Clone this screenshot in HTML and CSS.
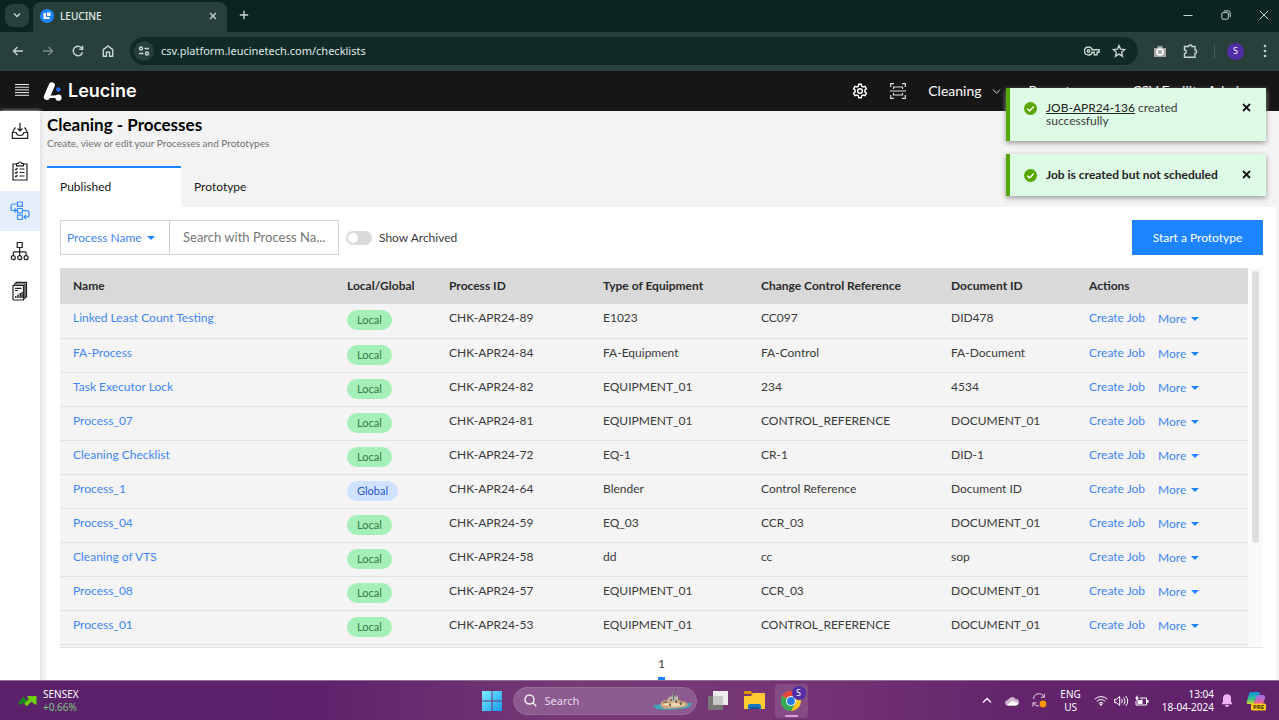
FILE: index.html
```html
<!DOCTYPE html>
<html lang="en">
<head>
<meta charset="utf-8">
<title>LEUCINE</title>
<link rel="stylesheet" href="styles.css">
</head>
<body>
<div class="screen">
  <div class="tabstrip">
    <button class="tab-search" aria-label="Search tabs"><svg width="10" height="10" viewBox="0 0 10 10"><path d="M2 3.5l3 3 3-3" class="ln"/></svg></button>
    <div class="browser-tab">
      <svg width="14" height="14" viewBox="0 0 14 14"><circle cx="7" cy="7" r="7" fill="#1d84ff"/><path d="M3.500 4v6h6V8H6V4z" fill="#fff"/><path d="M7 3.500h3.500V7H7z" fill="#fff"/></svg>
      <span class="tab-title">LEUCINE</span>
      <button class="bare" aria-label="Close tab"><svg width="10" height="10" viewBox="0 0 10 10"><path d="M2 2l6 6M8 2L2 8" class="ln"/></svg></button>
    </div>
    <button class="bare" aria-label="New tab"><svg width="10" height="10" viewBox="0 0 10 10"><path d="M5 .8v8.400M.8 5h8.400" class="ln"/></svg></button>
    <div class="window-buttons">
      <button class="bare" aria-label="Minimize"><svg width="10" height="10" viewBox="0 0 10 10"><path d="M.5 5.500h9" class="ln thin"/></svg></button>
      <button class="bare" aria-label="Restore"><svg width="10" height="10" viewBox="0 0 10 10"><rect x=".8" y="2.600" width="6.600" height="6.600" rx="1.200" class="ln thin"/><path d="M2.800.9h4.400a2 2 0 0 1 2 2v4.300" class="ln thin"/></svg></button>
      <button class="bare" aria-label="Close"><svg width="10" height="10" viewBox="0 0 10 10"><path d="M.8.8l8.400 8.400M9.200.8L.8 9.200" class="ln thin"/></svg></button>
    </div>
  </div>
  <div class="toolbar">
    <div class="nav-buttons">
      <button class="bare" aria-label="Back"><svg width="12" height="12" viewBox="0 0 12 12"><path d="M11 6H1.500M5.500 2l-4 4 4 4" class="ln"/></svg></button>
      <button class="bare dim" aria-label="Forward"><svg width="12" height="12" viewBox="0 0 12 12"><path d="M1 6h9.500M6.500 2l4 4-4 4" class="ln"/></svg></button>
      <button class="bare" aria-label="Reload"><svg width="12" height="12" viewBox="0 0 12 12"><path d="M10.500 7.200A4.700 4.700 0 1 1 9.600 3M10.600.8v3.400H7.200" class="ln"/></svg></button>
      <button class="bare" aria-label="Home"><svg width="12" height="12" viewBox="0 0 12 12"><path d="M1.300 11.300V4.600L6 1l4.700 3.600v6.700H7.600V7.200H4.400v4.100z" class="ln"/></svg></button>
    </div>
    <div class="address">
      <span class="site-info"><svg width="12" height="12" viewBox="0 0 12 12"><circle cx="3" cy="3.500" r="1.500" class="ln"/><path d="M6.500 3.500H11M1 8.500h4.500" class="ln"/><circle cx="9" cy="8.500" r="1.500" class="ln"/></svg></span>
      <input class="url" type="text" aria-label="Address" value="csv.platform.leucinetech.com/checklists">
      <svg width="16" height="10" viewBox="0 0 16 10"><path d="M4.500 1a4 4 0 1 0 3.700 5.300h2v2.500h2.900V6.300h2V3.700H8.200A4 4 0 0 0 4.500 1z" class="ln"/><circle cx="4.500" cy="5" r="1.300" class="ln"/></svg>
      <svg width="14" height="14" viewBox="0 0 14 14"><path d="M7 1.500l1.600 3.700 4 .4-3 2.700.9 3.900L7 10.100l-3.500 2.100.9-3.900-3-2.700 4-.4z" class="ln"/></svg>
    </div>
    <div class="extensions">
      <svg width="14" height="13" viewBox="0 0 14 13"><path d="M1 3h3l1-2h4l1 2h3v9H1z" fill="#a9aaa9"/><circle cx="7" cy="7" r="3" fill="#a9aaa9" stroke="#fff" stroke-width="1.600"/></svg>
      <svg width="15" height="15" viewBox="0 0 15 15"><path d="M1.500 2.500h4c0-2 3.500-2 3.500 0h3v3.500c2.200 0 2.200 3.300 0 3.300v4H1.500V9.500c2.400 0 2.400-3.500 0-3.500z" class="ln"/></svg>
      <span class="divider"></span>
      <span class="profile">S</span>
      <svg width="4" height="14" viewBox="0 0 4 14" fill="#c7d5d1"><circle cx="2" cy="2" r="1.300"/><circle cx="2" cy="7" r="1.300"/><circle cx="2" cy="12" r="1.300"/></svg>
    </div>
  </div>

  <header class="app-header">
    <button class="bare" aria-label="Menu"><svg width="14" height="12" viewBox="0 0 14 12"><path d="M0 .5h14M0 3.200h14M0 5.900h14M0 8.600h14M0 11.300h14" stroke="#eee" fill="none"/></svg></button>
    <div class="brand">
      <svg width="19" height="19" viewBox="0 0 19 19"><path d="M8.800 3.300L3.800 15" stroke="#fff" stroke-width="6" stroke-linecap="round"/><path d="M4 15L15.500 14.500" stroke="#fff" stroke-width="2.500"/><circle cx="15.500" cy="15.700" r="3.100" fill="#fff"/><circle cx="15.400" cy="7.500" r="2.300" fill="#2468f2"/></svg>
      <span>Leucine</span>
    </div>
    <div class="header-right">
      <svg width="16" height="16" viewBox="0 0 24 24"><path d="M10 2h4l.6 3 2 1.100 3-1 2 3.500-2.300 2v2.800l2.300 2-2 3.500-3-1-2 1.100-.6 3h-4l-.6-3-2-1.100-3 1-2-3.500 2.300-2v-2.800l-2.300-2 2-3.500 3 1 2-1.100z" fill="none" stroke="#fff" stroke-width="2.200"/><circle cx="12" cy="12" r="3.500" fill="none" stroke="#fff" stroke-width="2.200"/></svg>
      <svg width="16" height="16" viewBox="0 0 16 16" fill="none" stroke="#ddd" stroke-width="1.200"><path d="M.7 4V.7H4M12 .7h3.300V4M15.300 12v3.300H12M4 15.300H.7V12M0 8h16M3.500 6V4h9v2M3.500 10v2h9v-2"/></svg>
      <button class="header-menu">Cleaning <svg width="9" height="9" viewBox="0 0 9 9"><path d="M.8 2.500l3.700 3.700 3.700-3.700" class="ln thin"/></svg></button>
      <button class="header-menu reports">Reports</button>
      <button class="header-menu">CSV Facility Admin</button>
    </div>
  </header>

  <div class="app-body">
    <nav class="rail">
      <a href="#" aria-label="Inbox"><svg width="18" height="18" viewBox="0 0 18 18" class="ic"><path d="M5 6H3.700L1.300 11v5.300h15.400V11l-2.400-5H13M1.300 10.500h3.900c.4 4 7.200 4 7.600 0h3.900M9 .8v8M6.500 6.500L9 9l2.500-2.500"/></svg></a>
      <a href="#" aria-label="Jobs"><svg width="18" height="20" viewBox="0 0 18 20" class="ic"><path d="M5.500 3H2v16h14V3h-3.500M5.500 4.800h7V2.500h-1.800C10.400.5 7.600.5 7.300 2.500H5.500zM4 7.800l1 1 1.500-1.800M4 11.300l1 1 1.500-1.800M4 14.800l1 1 1.500-1.800M8.500 8h5M8.500 11.500h5M8.500 15h5"/></svg></a>
      <a href="#" class="active" aria-label="Processes"><svg width="20" height="20" viewBox="0 0 20 20" class="ic"><path d="M7.500 1h4.800v4.300H7.500zM7.500 7.500h4.800v4.300H7.500zM7.500 14.200h4.800v4.300H7.500zM7.500 3H3a2 2 0 0 0-2 2v2.500a2 2 0 0 0 2 2h3M4.500 7.500l2 2-2 2M12.300 9.700H17a2 2 0 0 1 2 2V14a2 2 0 0 1-2 2h-3M16 14l-2 2 2 2"/></svg></a>
      <a href="#" aria-label="Ontology"><svg width="20" height="20" viewBox="0 0 20 20" class="ic"><path d="M7.200 1.500h5v5h-5zM9.700 6.500v8.200M3.300 14.500v-2.600a1 1 0 0 1 1-1h10.800a1 1 0 0 1 1 1v2.600"/><circle cx="3.300" cy="16.700" r="2"/><circle cx="9.700" cy="16.700" r="2"/><circle cx="16.100" cy="16.700" r="2"/></svg></a>
      <a href="#" aria-label="Reports"><svg width="18" height="20" viewBox="0 0 18 20" class="ic"><path d="M2 4.500h10.500V19H3a1 1 0 0 1-1-1zM3.500 4.500V3H14v14.500h-1.500M5 3V1.300h10.500V16H14M4 7.300h6.500M4 9.500h3"/><path d="M4.800 17v-2M7 17v-3.500M9.200 17v-5M11 17v-6" stroke-width="1.400"/></svg></a>
    </nav>
    <main class="page">
      <h1>Cleaning - Processes</h1>
      <p class="subtitle">Create, view or edit your Processes and Prototypes</p>
      <div class="tabs" role="tablist">
        <button role="tab" aria-selected="true" class="tab selected">Published</button>
        <button role="tab" aria-selected="false" class="tab">Prototype</button>
      </div>
      <section class="panel">
        <div class="filters">
          <div class="search-group">
            <button class="field-picker">Process Name <span class="caret"></span></button>
            <input class="search" type="text" aria-label="Search" placeholder="Search with Process Na...">
          </div>
          <label class="toggle"><input type="checkbox" role="switch">Show Archived</label>
          <button class="primary">Start a Prototype</button>
        </div>
        <div class="table-box">
          <table>
            <colgroup><col class="c-name"><col class="c-scope"><col class="c-id"><col class="c-type"><col class="c-ref"><col class="c-doc"><col class="c-act"></colgroup>
            <thead><tr><th>Name</th><th>Local/Global</th><th>Process ID</th><th>Type of Equipment</th><th>Change Control Reference</th><th>Document ID</th><th>Actions</th></tr></thead>
            <tbody>
              <tr><td><a href="#">Linked Least Count Testing</a></td><td><span class="pill">Local</span></td><td>CHK-APR24-89</td><td>E1023</td><td>CC097</td><td>DID478</td><td><div class="actions"><a href="#">Create Job</a><button class="more">More <span class="caret"></span></button></div></td></tr>
              <tr><td><a href="#">FA-Process</a></td><td><span class="pill">Local</span></td><td>CHK-APR24-84</td><td>FA-Equipment</td><td>FA-Control</td><td>FA-Document</td><td><div class="actions"><a href="#">Create Job</a><button class="more">More <span class="caret"></span></button></div></td></tr>
              <tr><td><a href="#">Task Executor Lock</a></td><td><span class="pill">Local</span></td><td>CHK-APR24-82</td><td>EQUIPMENT_01</td><td>234</td><td>4534</td><td><div class="actions"><a href="#">Create Job</a><button class="more">More <span class="caret"></span></button></div></td></tr>
              <tr><td><a href="#">Process_07</a></td><td><span class="pill">Local</span></td><td>CHK-APR24-81</td><td>EQUIPMENT_01</td><td>CONTROL_REFERENCE</td><td>DOCUMENT_01</td><td><div class="actions"><a href="#">Create Job</a><button class="more">More <span class="caret"></span></button></div></td></tr>
              <tr><td><a href="#">Cleaning Checklist</a></td><td><span class="pill">Local</span></td><td>CHK-APR24-72</td><td>EQ-1</td><td>CR-1</td><td>DID-1</td><td><div class="actions"><a href="#">Create Job</a><button class="more">More <span class="caret"></span></button></div></td></tr>
              <tr><td><a href="#">Process_1</a></td><td><span class="pill global">Global</span></td><td>CHK-APR24-64</td><td>Blender</td><td>Control Reference</td><td>Document ID</td><td><div class="actions"><a href="#">Create Job</a><button class="more">More <span class="caret"></span></button></div></td></tr>
              <tr><td><a href="#">Process_04</a></td><td><span class="pill">Local</span></td><td>CHK-APR24-59</td><td>EQ_03</td><td>CCR_03</td><td>DOCUMENT_01</td><td><div class="actions"><a href="#">Create Job</a><button class="more">More <span class="caret"></span></button></div></td></tr>
              <tr><td><a href="#">Cleaning of VTS</a></td><td><span class="pill">Local</span></td><td>CHK-APR24-58</td><td>dd</td><td>cc</td><td>sop</td><td><div class="actions"><a href="#">Create Job</a><button class="more">More <span class="caret"></span></button></div></td></tr>
              <tr><td><a href="#">Process_08</a></td><td><span class="pill">Local</span></td><td>CHK-APR24-57</td><td>EQUIPMENT_01</td><td>CCR_03</td><td>DOCUMENT_01</td><td><div class="actions"><a href="#">Create Job</a><button class="more">More <span class="caret"></span></button></div></td></tr>
              <tr><td><a href="#">Process_01</a></td><td><span class="pill">Local</span></td><td>CHK-APR24-53</td><td>EQUIPMENT_01</td><td>CONTROL_REFERENCE</td><td>DOCUMENT_01</td><td><div class="actions"><a href="#">Create Job</a><button class="more">More <span class="caret"></span></button></div></td></tr>
            </tbody>
          </table>
          <div class="scrollbar"><div class="thumb"></div></div>
        </div>
        <div class="pager"><button class="page-number">1</button></div>
      </section>
    </main>
  </div>

  <footer class="taskbar">
    <div class="widget">
      <svg width="19" height="12" viewBox="0 0 19 12"><path d="M1.500 9l4-4.500 3.500 4" fill="none" stroke="#148a1c" stroke-width="3.500"/><path d="M7.500 10L14 3.500" stroke="#6ccf10" stroke-width="3.800"/><path d="M9.500 1h9v8.500h-1.800L9.500 2.800z" fill="#6ccf10"/></svg>
      <div class="widget-text"><span>SENSEX</span><span class="gain">+0.66%</span></div>
    </div>
    <div class="dock">
      <svg width="20" height="20" viewBox="0 0 20 20"><defs><linearGradient id="win" x2="1" y2="1"><stop stop-color="#7df0ff"/><stop offset="1" stop-color="#1399ee"/></linearGradient></defs><path d="M0 0h9.500v9.500H0zM10.500 0H20v9.500h-9.500zM0 10.500h9.500V20H0zM10.500 10.500H20V20h-9.500z" fill="url(#win)"/></svg>
      <button class="os-search">
        <svg width="13" height="13" viewBox="0 0 13 13" fill="none" stroke="#eee" stroke-width="1.500"><circle cx="5.500" cy="5.500" r="4.500"/><path d="M8.800 8.800L12.300 12.300"/></svg>
        <span>Search</span>
        <svg width="40" height="18" viewBox="0 0 40 18"><path d="M0 13l13-1 27-1-5 5-18 2-14-1z" fill="#3fa5b9"/><path d="M7 13l2-4 5-1 1-2 3-1 4 2h4l2 2 5 1 2 4-8 2-16 1z" fill="#c9a47f"/><path d="M15 9l2-5 2 1 1-5 2 5 2-2 2 5-4 2z" fill="#b9b5a8"/><path d="M9 13l4-2 4 1 4-2 6 2 3-1 2 2-10 2z" fill="#f0d8b4"/><path d="M12 9h2v2h-2zM17 7h2v2h-2zM22 8h2v3h-2zM27 10h2v3h-2zM16 12h2v2h-2z" fill="#81694f"/><path d="M20 1h1v7h-1zM10 10h2v1h-2zM25 7h2v1h-2z" fill="#557458"/></svg>
      </button>
      <svg width="20" height="19" viewBox="0 0 20 19"><path d="M0 5h15v14H0z" fill="#777"/><path d="M5 0h15v14H5z" fill="#eee"/><path d="M5 5h10v9H5z" fill="#c8c8c8"/></svg>
      <svg width="21" height="19" viewBox="0 0 21 19"><path d="M0 1a1 1 0 0 1 1-1h6l2 3H0z" fill="#dd9708"/><path d="M0 5h7l2-3h11a1 1 0 0 1 1 1v15H0z" fill="#ffca32"/><path d="M4 18v-3a2 2 0 0 1 2-2h9a2 2 0 0 1 2 2v3z" fill="#1475c5"/><path d="M6 16h9v2H6z" fill="#075398"/></svg>
      <div class="chrome-task">
        <svg width="22" height="22" viewBox="0 0 22 22"><circle cx="11" cy="11" r="10" fill="#fbc91d"/><path d="M11 11L2.300 6a10 10 0 0 1 17.400 0z" fill="#e5443a"/><path d="M11 11L2.300 6A10 10 0 0 0 11 21l4.500-8z" fill="#35a853"/><circle cx="11" cy="11" r="5" fill="#fff"/><circle cx="11" cy="11" r="3.900" fill="#2478e8"/></svg>
        <span class="chrome-badge">S</span>
      </div>
    </div>
    <div class="tray">
      <svg width="10" height="7" viewBox="0 0 10 7"><path d="M1 5.500l4-4 4 4" fill="none" stroke="#fff" stroke-width="1.300"/></svg>
      <svg width="14" height="10" viewBox="0 0 14 10"><path d="M3 9.500a2.700 2.700 0 0 1 0-5.500A4.200 4.200 0 0 1 10.500 3 3.200 3.200 0 0 1 11 9.500z" fill="#cdb6ce"/><path d="M2 9l5-4 6 2a2 2 0 0 1-2 2.500H3z" fill="#fff"/></svg>
      <svg width="15" height="15" viewBox="0 0 15 15"><path d="M1.500 6A5.500 5.500 0 0 1 12 4M12.300.8v3.500H9M1 13.500V9.800h3.500M1.500 10A5.500 5.500 0 0 0 7 13" fill="none" stroke="#e5d4e6"/><circle cx="11" cy="11" r="3.400" fill="#ff9800"/></svg>
      <div class="lang"><span>ENG</span><span>US</span></div>
      <div class="status">
        <svg width="14" height="11" viewBox="0 0 14 11" fill="none" stroke="#fff"><path d="M.7 4.200a9 9 0 0 1 12.600 0M2.800 6.300a6 6 0 0 1 8.400 0M4.800 8.300a3.200 3.200 0 0 1 4.400 0"/><circle cx="7" cy="9.500" r=".8" fill="#fff"/></svg>
        <svg width="15" height="12" viewBox="0 0 15 12" fill="none" stroke="#fff"><path d="M.7 4.200h2l3-2.700v9l-3-2.700h-2zM7.500 4a3 3 0 0 1 0 4M9.500 2.500a5 5 0 0 1 0 7M11.600 1a7 7 0 0 1 0 10"/></svg>
        <svg width="14" height="12" viewBox="0 0 14 12"><path d="M5 3h6.500v7H1V6" fill="none" stroke="#fff"/><path d="M2.500 5.500l5-1V9h-5zM12 5h1.500v3H12zM2.500 0v2.500H4L2 6 .3 3z" fill="#fff"/></svg>
      </div>
      <div class="clock"><span>13:04</span><span>18-04-2024</span></div>
      <svg width="12" height="13" viewBox="0 0 12 13"><path d="M6 .3a4 4 0 0 1 4 4v3.400l1.500 2.500H.5L2 7.700V4.300a4 4 0 0 1 4-4zM4 11h4a2 2 0 0 1-4 0z" fill="#efb5f3"/></svg>
      <svg width="20" height="20" viewBox="0 0 20 20"><defs><linearGradient id="cp" y2="1" x2="0"><stop stop-color="#168fe3"/><stop offset=".6" stop-color="#35c58b"/><stop offset="1" stop-color="#d7d82a"/></linearGradient><linearGradient id="cq" y2="1" x2="0"><stop stop-color="#9a70ef"/><stop offset="1" stop-color="#f2638e"/></linearGradient></defs><path d="M5 1h7q2 0 2 2l-2 3q-2 0-3 3l-1 4H2q-2 0-1-3l2-7q.5-2 2-2z" fill="url(#cp)"/><path d="M12 4h5q2.500 0 2 3l-2 6H8l2-6q.5-3 2-3z" fill="url(#cq)"/><rect x="5" y="12.500" width="15" height="7" rx="1.500" fill="#ffca16"/><text x="12.500" y="18.300" class="pre">PRE</text></svg>
    </div>
  </footer>

  <div class="toasts">
    <div class="toast tall" role="status">
      <svg width="13" height="13" viewBox="0 0 13 13"><circle cx="6.500" cy="6.500" r="6.500" fill="#57a700"/><path d="M3.300 6.700l2.300 2.200 4.200-4.300" fill="none" stroke="#fff" stroke-width="1.500"/></svg>
      <p><a href="#">JOB-APR24-136</a> created successfully</p>
      <button class="bare" aria-label="Dismiss"><svg width="9" height="9" viewBox="0 0 9 9"><path d="M1 1l7 7M8 1L1 8" stroke="#111" stroke-width="1.800"/></svg></button>
    </div>
    <div class="toast" role="status">
      <svg width="13" height="13" viewBox="0 0 13 13"><circle cx="6.500" cy="6.500" r="6.500" fill="#57a700"/><path d="M3.300 6.700l2.300 2.200 4.200-4.300" fill="none" stroke="#fff" stroke-width="1.500"/></svg>
      <p class="strong">Job is created but not scheduled</p>
      <button class="bare" aria-label="Dismiss"><svg width="9" height="9" viewBox="0 0 9 9"><path d="M1 1l7 7M8 1L1 8" stroke="#111" stroke-width="1.800"/></svg></button>
    </div>
  </div>
</div>
</body>
</html>
```
FILE: styles.css
```css
* { box-sizing: border-box; }
body { margin: 0; font-family: Lato, "Liberation Sans", sans-serif; font-size: 12px; line-height: 16px; color: #3a3a3a; }
button, input { font: inherit; color: inherit; margin: 0; }
button { border: 0; padding: 0; background: none; }
a { color: #3f86f7; text-decoration: none; }
svg { display: block; flex: none; }
h1, p { margin: 0; }

.screen { position: relative; display: flex; flex-direction: column; height: 100vh; overflow: hidden; }
.ln { fill: none; stroke: #c7d5d1; stroke-width: 1.4; }
.thin { stroke-width: 1; }
.bare { display: flex; align-items: center; justify-content: center; }
.dim { opacity: .5; }

.tabstrip, .toolbar, .taskbar { font-family: "Noto Sans", sans-serif; font-size: 11px; }
.tabstrip { display: flex; align-items: center; height: 32px; padding: 0 10px 2px 5px; background: #0a2420; flex: none; }
.tab-search { width: 24px; height: 23px; border-radius: 8px; background: #28403b; display: flex; align-items: center; justify-content: center; }
.browser-tab { display: flex; align-items: center; gap: 6px; width: 194px; height: 30px; margin: 3px 12px -2px 4px; padding: 0 9px 3px 7px; border-radius: 8px 8px 0 0; background: #28403b; color: #e3ece9; align-self: flex-end; }
.tab-title { flex: 1; font-size: 10px; font-weight: 500; }
.window-buttons { display: flex; gap: 28px; margin-left: auto; }

.toolbar { display: flex; align-items: center; gap: 15px; height: 39px; padding: 0 12px 1px; background: #28403b; flex: none; }
.nav-buttons { display: flex; gap: 18px; padding-right: 1px; }
.address { display: flex; align-items: center; gap: 12px; flex: 1; height: 28px; padding: 0 12px 0 4px; border-radius: 14px; background: #102a26; }
.site-info { display: flex; align-items: center; justify-content: center; width: 20px; height: 20px; border-radius: 50%; background: #28403b; }
.url { flex: 1; min-width: 0; margin-left: -5px; padding: 0; border: 0; background: none; color: #dfe9e6; }
.extensions { display: flex; align-items: center; gap: 16px; }
.divider { width: 1px; height: 14px; background: #48605a; }
.profile { display: flex; align-items: center; justify-content: center; width: 17px; height: 17px; margin: 0 3px 0 -4px; border-radius: 50%; background: #512da8; color: #fff; font-size: 9px; }

.app-header { display: flex; align-items: center; height: 40px; padding: 0 32px 0 13px; gap: 14px; background: #161616; color: #fff; flex: none; }
.app-header > .bare { padding: 0 0 3px 2px; }
.brand { display: flex; align-items: center; gap: 6px; font-family: Inter, sans-serif; font-size: 18px; font-weight: 600; }
.header-right { display: flex; align-items: center; gap: 22px; margin-left: auto; font-size: 14px; }
.header-menu { display: flex; align-items: center; gap: 10px; }
.reports { padding: 0 34px 0 6px; }

.app-body { display: flex; flex: 1; min-height: 0; background: #f3f3f3; }
.rail { width: 40px; background: #fff; flex: none; box-shadow: 1px 0 4px #ddd; }
.rail a { display: flex; align-items: center; justify-content: center; height: 40px; color: #222; }
.rail .active { background: #e5effc; color: #3f8cf8; }
.ic { fill: none; stroke: currentColor; stroke-width: 1.2; }
.page { display: flex; flex-direction: column; flex: 1; min-width: 0; padding: 4px 3px 0 7px; }
h1 { font-size: 17px; line-height: 20px; font-weight: 700; color: #000; }
.subtitle { font-size: 10px; line-height: 16px; color: #6f6f6f; }
.tabs { display: flex; margin-top: 15px; }
.tab { width: 134px; height: 41px; padding: 0 13px 2px; text-align: left; color: #161616; border-top: 2px solid transparent; }
.selected { background: #fff; border-color: #1d84ff; }
.panel { display: flex; flex-direction: column; flex: 1; min-height: 0; padding: 13px 13px 0; background: #fff; }
.filters { display: flex; align-items: center; height: 35px; flex: none; }
.search-group { display: flex; width: 279px; height: 35px; border: 1px solid #d5d5d5; }
.field-picker { width: 109px; padding-left: 6px; text-align: left; color: #3f86f7; border-right: 1px solid #ccc; flex: none; }
.caret { display: inline-block; margin: 0 0 2px 2px; border: 4px solid transparent; border-top-color: #1d84ff; border-bottom: 0; }
.search { flex: 1; min-width: 0; padding: 0 3px 2px 13px; border: 0; font-size: 13px; text-overflow: ellipsis; background: #fff; }
.search::placeholder { color: #777; opacity: 1; }
.toggle { display: flex; align-items: center; gap: 7px; margin-left: 7px; }
.toggle input { appearance: none; width: 26px; height: 14px; padding: 2px; border-radius: 7px; background: #d9d9d9; }
.toggle input::before { content: ""; display: block; width: 10px; height: 10px; border-radius: 50%; background: #fff; }
.primary { width: 131px; height: 35px; margin-left: auto; background: #1d84ff; color: #fff; }

.table-box { display: flex; flex: 1; min-height: 0; margin-top: 13px; background: #f4f4f4; border-bottom: 1px solid #e5e5e5; align-items: flex-start; }
table { flex: 1; border-collapse: collapse; table-layout: fixed; width: 100%; background: #f4f4f4; }
.c-name { width: 274px; }
.c-scope { width: 102px; }
.c-id { width: 154px; }
.c-type { width: 158px; }
.c-ref { width: 190px; }
.c-doc { width: 138px; }
.c-act { width: 172px; }
th { height: 36px; padding: 0 13px 1px; text-align: left; font-size: 12px; font-weight: 700; background: #d9d9d9; color: #2a2a2a; white-space: nowrap; }
td { height: 34px; padding: 6px 13px 0; vertical-align: top; border-bottom: 1px solid #e2e2e2; white-space: nowrap; }
.pill { display: block; width: max-content; height: 20px; padding: 0 10px; border-radius: 10px; background: #a5efb8; color: #357a46; font-size: 11px; line-height: 19px; }
.global { background: #d0e2ff; color: #2458c8; }
.actions { display: flex; gap: 13px; }
.more { color: #3f86f7; padding-top: 1px; }
.scrollbar { align-self: stretch; width: 15px; padding: 3px 4px; background: #fafafa; flex: none; }
.thumb { height: 73%; border-radius: 4px; background: #dedede; }
.pager { display: flex; justify-content: center; height: 32px; flex: none; }
.page-number { width: 7px; padding-top: 8px; border-bottom: 3px solid #1d84ff; display: flex; justify-content: center; }

.taskbar { display: grid; grid-template-columns: 1fr auto 1fr; align-items: center; height: 40px; padding: 0 12px 0 18px; border-top: 1px solid #927096; background: linear-gradient(90deg, #5b216b 0, #5d226b 25%, #773a76 45%, #753575 62%, #63246b 80%, #60226b 100%); color: #fff; font-size: 10px; line-height: 13px; flex: none; }
.widget { display: flex; align-items: center; gap: 6px; }
.widget-text, .clock, .lang { display: flex; flex-direction: column; }
.gain { color: #7bc57d; }
.dock { display: flex; align-items: center; gap: 11px; padding-left: 4px; }
.dock > svg { margin-right: 5px; }
.dock > svg:first-child { margin-right: 0; }
.os-search { display: flex; align-items: center; gap: 8px; width: 184px; height: 28px; padding: 0 3px 0 10px; border-radius: 14px; border: 1px solid #996b9a; background: #8c5a8f; color: #eadbea; font-size: 11px; text-align: left; }
.os-search span { flex: 1; }
.chrome-task { position: relative; display: flex; align-items: center; justify-content: center; width: 33px; height: 34px; margin-left: -6px; border-radius: 4px; background: #854b84; }
.chrome-task::after { content: ""; position: absolute; left: 10px; right: 10px; bottom: 1px; height: 2px; border-radius: 1px; background: #e49be8; }
.chrome-badge { position: absolute; top: 2px; right: 2px; width: 14px; height: 14px; border-radius: 50%; background: #512da8; font-size: 9px; text-align: center; }
.tray { display: flex; align-items: center; justify-content: flex-end; gap: 13px; padding-right: 1px; }
.lang { align-items: center; }
.status { display: flex; align-items: center; gap: 6px; }
.clock { align-items: flex-end; }
.clock + svg { margin-left: -6px; }
.pre { font-size: 6px; font-weight: 700; fill: #332b10; text-anchor: middle; }

.toasts { position: absolute; top: 88px; right: 13px; width: 260px; display: flex; flex-direction: column; gap: 13px; }
.toast { display: flex; align-items: flex-start; gap: 9px; min-height: 42px; padding: 14px 15px 0 14px; border-left: 4px solid #57a700; background: #defbe6; box-shadow: 0 2px 5px #999; line-height: 13px; }
.toast > svg { margin-top: 1px; }
.toast p { flex: 1; }
.toast .bare { padding-top: 2px; }
.toast a { color: #222; text-decoration: underline; }
.tall { min-height: 53px; padding-top: 13px; }
.strong { font-weight: 700; color: #222; }
```
